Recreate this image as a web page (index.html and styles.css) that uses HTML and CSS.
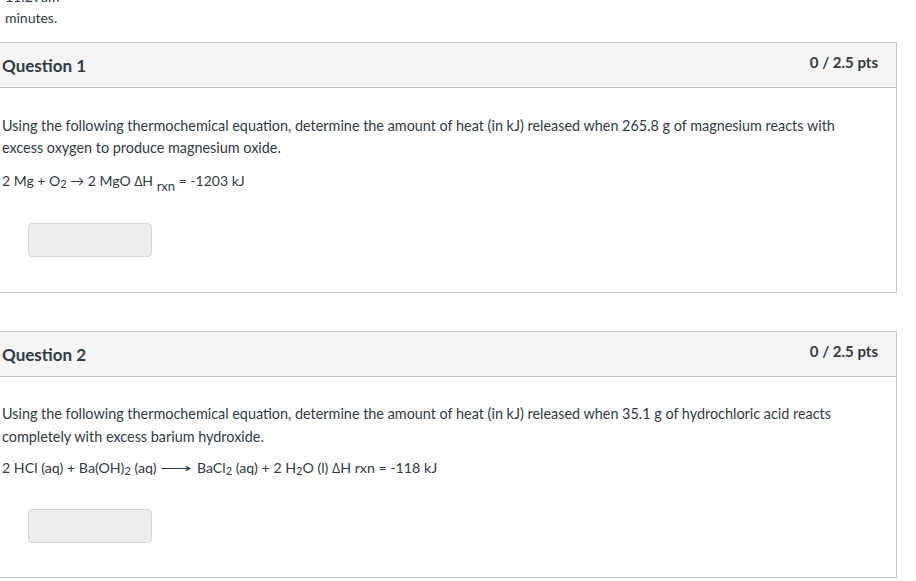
FILE: index.html
```html
<!DOCTYPE html>
<html>
<head>
<meta charset="utf-8">
<link rel="stylesheet" href="styles.css">
</head>
<body>
<div class="top">
  <div class="time">11:29am</div>
  <div class="note">minutes.</div>
</div>

<div class="card">
  <div class="card-head">
    <span class="q-title">Question 1</span>
    <span class="q-pts">0 / 2.5 pts</span>
  </div>
  <div class="card-body">
    <p class="para">Using the following thermochemical equation, determine the amount of heat (in kJ) released when 265.8 g of magnesium reacts with excess oxygen to produce magnesium oxide.</p>
    <p class="eq eq-first">2 Mg + O<sub class="s2">2</sub> → 2 MgO ∆H <sub class="rxn">rxn</sub> = -1203 kJ</p>
    <div class="answer"></div>
  </div>
</div>

<div class="card card-second">
  <div class="card-head">
    <span class="q-title">Question 2</span>
    <span class="q-pts">0 / 2.5 pts</span>
  </div>
  <div class="card-body">
    <p class="para">Using the following thermochemical equation, determine the amount of heat (in kJ) released when 35.1 g of hydrochloric acid reacts completely with excess barium hydroxide.</p>
    <p class="eq">2 HCl (aq) + Ba(OH)<sub class="s2">2</sub> (aq) <span class="longarrow">⟶</span> BaCl<sub class="s2">2</sub> (aq) + 2 H<sub class="s2">2</sub>O (l) ∆H rxn = -118 kJ</p>
    <div class="answer"></div>
  </div>
</div>
</body>
</html>
```

FILE: styles.css
```css
html, body {
  margin: 0;
  padding: 0;
  background: #ffffff;
}

body {
  font-family: Lato, "Open Sans", "Liberation Sans", sans-serif;
  color: #2d3b45;
  font-size: 14.4px;
  width: 916px;
  height: 581px;
  overflow: hidden;
}

.top {
  margin-top: -14px;
  padding-left: 5px;
  line-height: 21px;
  font-size: 14px;
  height: 56px;
}

.card {
  margin-left: -1px;
  width: 896px;
  border: 1px solid #c5c5c5;
  margin-bottom: 38px;
}

.card-head {
  display: flex;
  justify-content: space-between;
  align-items: center;
  height: 44px;
  background: #f5f5f5;
  border-bottom: 1px solid #c5c5c5;
  padding: 0 18px 0 2px;
}

.q-title {
  font-weight: 700;
  font-size: 17px;
}

.q-pts {
  font-weight: 700;
  font-size: 15px;
  margin-top: -7px;
}

.card-body {
  padding: 27px 20px 35px 2px;
}

.para {
  margin: 0;
  line-height: 22px;
  padding-right: 40px;
}

.eq {
  margin: 11px 0 0 0;
  line-height: 22px;
  font-size: 14.2px;
}

.eq-first {
  font-size: 14px;
}

.card-second .card-body {
  padding-top: 25px;
  padding-bottom: 34px;
}

.card-second .para {
  line-height: 23px;
}

.card-second .eq {
  margin-top: 9px;
}

.card-second .answer {
  margin-top: 30px;
}

.s2 {
  font-size: 11px;
  vertical-align: -2px;
  line-height: 0;
}

.rxn {
  font-size: 13px;
  vertical-align: -5px;
  line-height: 0;
}

.longarrow {
  display: inline-block;
  font-size: 13px;
  transform: scaleX(1.7);
  margin: 0 7px;
}

.answer {
  margin: 31px 0 0 26px;
  width: 122px;
  height: 32px;
  background: #ededed;
  border: 1px solid #d7d7d7;
  border-radius: 4px;
}
```
